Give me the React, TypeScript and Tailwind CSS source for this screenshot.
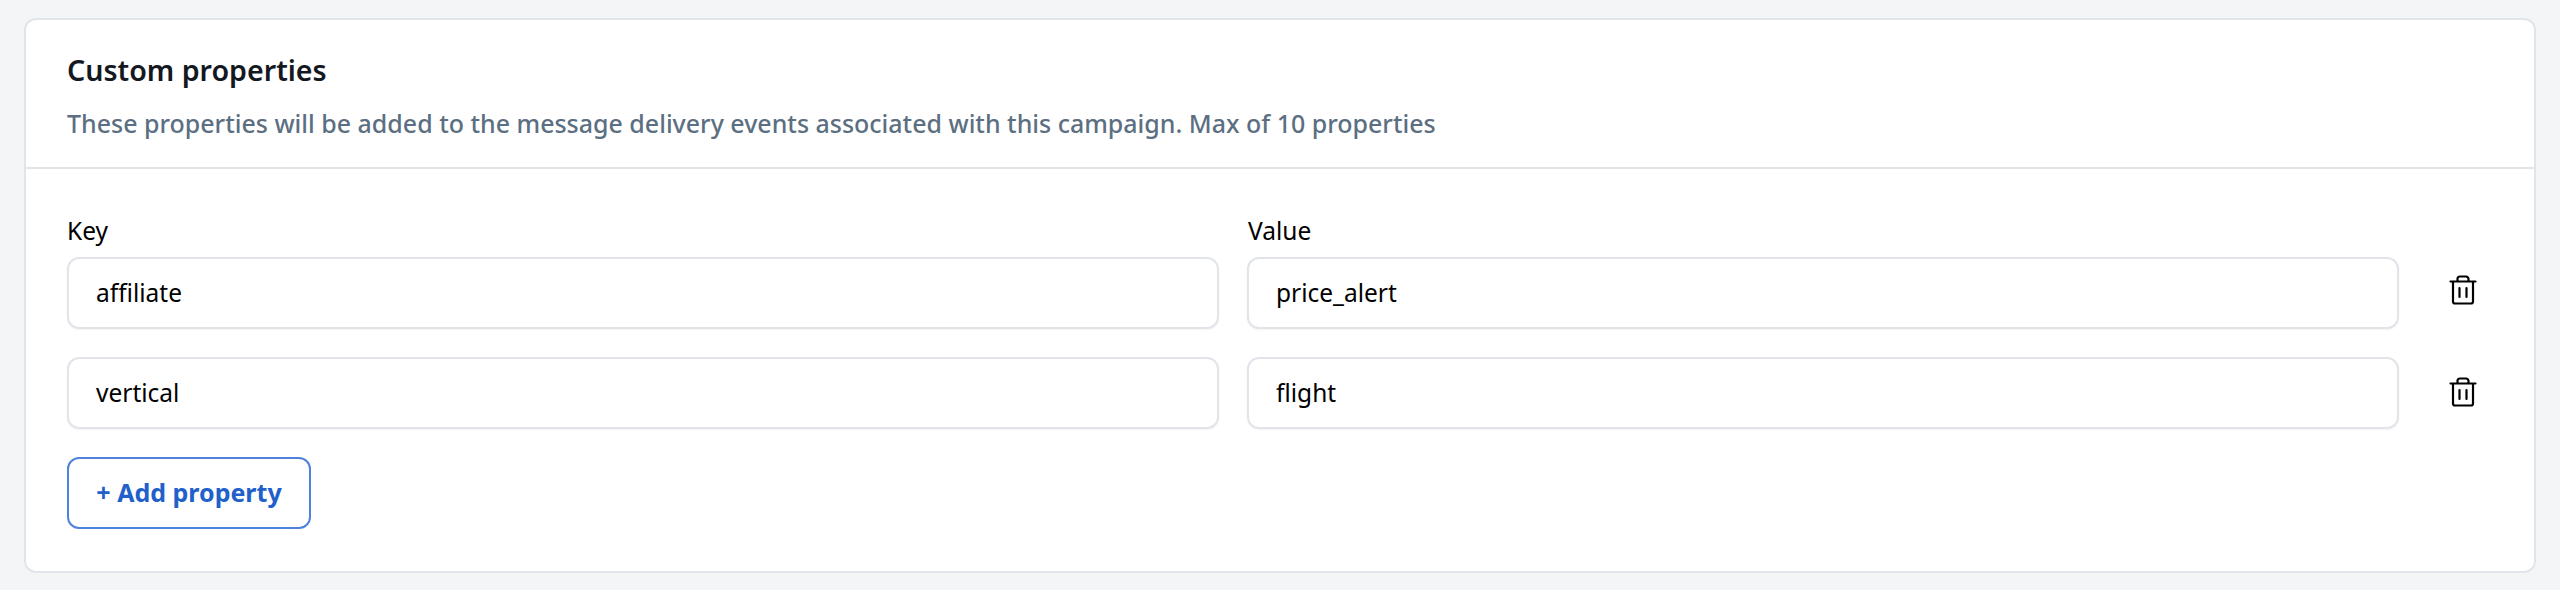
const rows = [
	{ key: 'affiliate', value: 'price_alert', iconClass: 'mb-[9px]' },
	{ key: 'vertical', value: 'flight', iconClass: 'mb-[5px]' },
];

function TrashIcon() {
	return (
		<svg width="32" height="32" viewBox="0 0 32 32" fill="none" stroke="#000" strokeWidth="2.2" strokeLinecap="round" strokeLinejoin="round">
			<path d="M3.500 8.500h25M10.500 8V6a2.500 2.500 0 0 1 2.500-2.500h6A2.500 2.500 0 0 1 21.500 6v2M6 9v19.500a2 2 0 0 0 2 2h16a2 2 0 0 0 2-2V9M12.500 15v9M19.500 15v9" />
		</svg>
	);
}

function Field({ value }: { value: string }) {
	return (
		<div className="flex h-[72px] items-center rounded-[12px] border-2 border-[#e1e5ea] bg-white px-[27px] pt-px text-[24.500px] text-black shadow-[0_1px_2px_rgba(16,24,40,0.05)]">
			{value}
		</div>
	);
}

export default function App() {
	return (
		<div className="h-[590px] bg-[#f4f5f7] px-[24px] pt-[18px] font-['Noto_Sans',sans-serif]">
			<div className="h-[555px] rounded-[12px] border-2 border-[#e1e5ea] bg-white">
				<div className="h-[149px] border-b-2 border-[#e1e5ea] px-[41px] pt-[30px]">
					<h2 className="text-[28.600px] font-semibold leading-[40px] text-[#14181f]">Custom properties</h2>
					<p className="mt-[16px] text-[24.970px] font-medium leading-[34px] text-[#5c6f82]">
						These properties will be added to the message delivery events associated with this campaign. Max of 10 properties
					</p>
				</div>
				<div className="px-[41px] pt-[45px]">
					<div className="flex gap-[28px] text-[24.500px] leading-[34px] text-black">
						<span className="w-[1152px]">Key</span>
						<span className="pl-px">Value</span>
					</div>
					<div className="mt-[9px] flex flex-col gap-[28px]">
						{rows.map((row) => (
							<div key={row.key} className="flex items-center gap-[28px]">
								<div className="w-[1152px]"><Field value={row.key} /></div>
								<div className="w-[1152px]"><Field value={row.value} /></div>
								<div className={`ml-[20px] ${row.iconClass}`}><TrashIcon /></div>
							</div>
						))}
					</div>
					<button className="mt-[28px] h-[72px] w-[244px] rounded-[12px] border-2 border-[#4f82dc] text-[25px] font-bold text-[#2160cb]">
						+ Add property
					</button>
				</div>
			</div>
		</div>
	);
}
